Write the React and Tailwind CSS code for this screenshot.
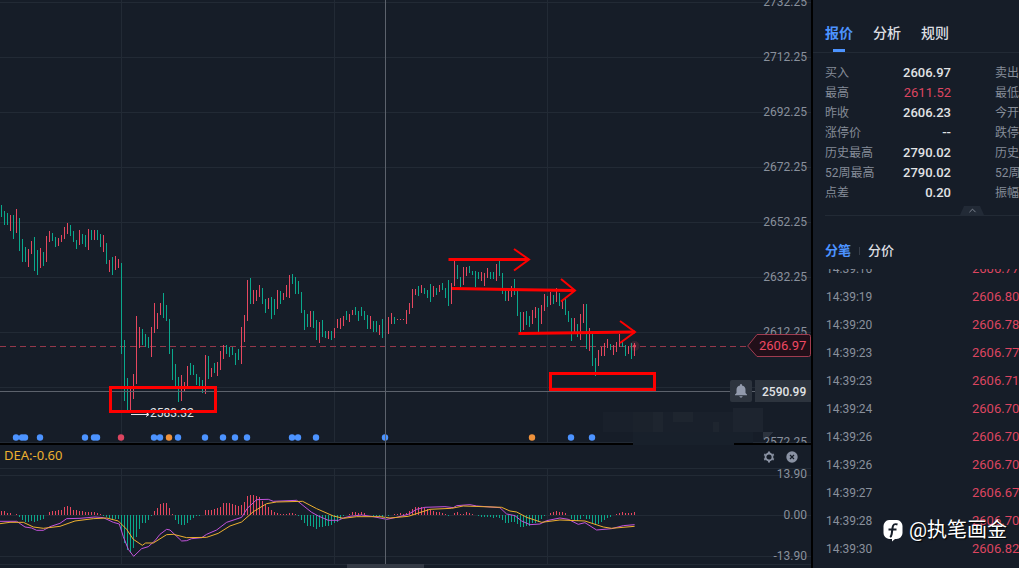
import React from 'react';
import { ChevronUp } from 'lucide-react';

const UP = '#e5475f';
const DOWN = '#0aa88c';

// One entry per candle: direction, top, bottom
const candles = `
G205-217 G211-225 G213-225 R215-231 G215-239 R209-233 G218-251 G239-262 G247-262 R249-267
R241-254 G237-271 G250-275 R248-268 G252-266 R236-262 R231-242 G233-241 G237-247 R238-246
R235-242 R227-239 R223-234 G225-236 G231-242 G240-249 R230-245 G234-244 G235-247 R229-250
G230-240 R230-240 G230-240 G234-247 R235-252 G243-264 R260-272 G257-275 R256-270 R259-268
G263-354 G340-401 G378-410 R389-410 R374-399 R316-384 R327-348 G329-345 G334-347 G337-348
R327-357 R303-333 R313-329 R303-315 G293-318 G305-321 G319-354 G349-380 G364-387 G377-402
R375-401 R382-392 R366-387 G363-375 G365-375 G374-385 G377-387 G380-393 R355-394 G356-379
R368-377 G363-373 R362-376 R351-370 R345-359 G345-354 G347-357 G347-355 G353-365 G349-360
R327-364 R315-342 R280-321 G278-304 R290-304 R290-301 R285-297 G288-304 G299-313 R298-309
G297-319 G299-315 R290-309 G291-304 R293-300 R285-297 R275-298 G274-284 G277-294 G281-294
G292-313 G310-330 G314-327 R311-327 G311-328 G320-340 R322-343 G320-337 G331-338 R331-339
G331-340 R328-338 R319-328 R318-329 R316-326 G311-320 R314-322 R310-315 G307-315 G311-321
G307-316 G311-320 G315-329 R316-329 G321-332 G321-332 R325-335 G319-338 R329-338 R317-334
R313-324 G317-324 R319-320 R319-320 R319-320 R310-324 R303-314 R289-308 R289-295 G286-296
R285-293 G288-294 G290-298 G284-302 R286-297 G288-295 R285-292 G283-290 G288-298 G280-306
R283-304 R261-286 G265-279 G277-287 R267-285 R267-276 G266-273 G271-275 G271-287 G272-279
R272-281 R273-286 R268-278 G272-279 G272-279 R264-281 G261-276 G273-294 G290-301 R290-301
R286-297 G279-295 G290-316 G312-332 R312-330 G311-325 G316-327 R310-324 R307-318 G308-332
R305-324 R294-311 G296-307 R292-305 G295-304 R288-302 G293-306 R300-309 G298-315 G311-322
G318-341 R318-333 G324-337 R314-340 R304-323 G304-349 R328-351 G333-366 G358-376 R350-366
R347-356 R343-356 R339-348 G344-350 R345-355 R342-352 R334-347 G342-347 G345-356 R346-354
G343-359 R343-356`
  .trim()
  .split(/\s+/)
  .map((c) => {
    const [top, bottom] = c.slice(1).split('-').map(Number);
    return { up: c[0] === 'R', top, bottom };
  });

// MACD histogram, thirds of a pixel above or below zero
const histogram = [
  12, 12, 6, 6, 0, 3, -7, -15, -21, -22, -19, -22, -19, -15, -12, 0, 9, 12, 12, 15,
  16, 24, 27, 24, 16, 15, 12, 12, 9, 9, 9, 9, 6, 3, -3, -7, -9, -12, -12, -12,
  -48, -84, -105, -115, -99, -66, -42, -24, -24, -15, -3, 12, 21, 33, 36, 36, 21, 4, -15, -27,
  -30, -30, -24, -15, -9, -3, -3, 0, 15, 15, 15, 18, 21, 24, 36, 36, 36, 33, 30, 27,
  30, 39, 57, 60, 60, 57, 54, 42, 33, 24, 15, 10, 7, 3, 3, 3, 6, 6, 3, -3,
  -15, -24, -33, -33, -36, -42, -36, -36, -33, -33, -30, -24, -20, -12, -3, 0, 3, 9, 9, 7,
  9, 6, 0, -1, -3, -3, -3, -6, -9, -3, 0, 3, 3, 6, 4, 6, 12, 18, 24, 24,
  24, 21, 18, 15, 12, 10, 9, 6, 3, -3, 0, 7, 9, 4, 3, 9, 6, 3, 0, -3,
  -6, -6, -7, -7, -10, -7, -8, -15, -24, -24, -21, -21, -27, -36, -36, -33, -33, -24, -24, -21,
  -12, -3, 0, 6, 9, 12, 9, 9, 6, 0, -12, -15, -18, -12, -3, -12, -12, -24, -30, -27,
  -21, -15, -9, -6, 0, 2, 6, 9, 6, 6, 6, 9,
];

const difLine =
  '0,244 50,244 75,261 95,264 110,271 130,271 150,260 180,250 200,236 240,235 285,231 310,233 340,247 358,252 370,290 385,328 401,349 425,326 445,320 465,302 480,283 500,268 510,270 545,303 560,302 575,296 605,293 620,283 650,270 680,247 725,232 742,205 770,179 805,178 820,184 890,181 935,217 955,228 985,241 1015,241 1030,234 1050,229 1085,225 1120,230 1160,238 1190,232 1225,223 1250,208 1275,202 1335,200 1360,203 1370,197 1410,194 1430,198 1500,203 1520,222 1545,227 1565,243 1590,254 1620,252 1640,242 1680,234 1705,238 1735,253 1755,248 1790,270 1835,266 1870,257 1904,254';
const deaLine =
  '0,251 30,247 70,247 100,261 130,265 180,259 225,243 280,236 320,234 355,243 380,268 400,298 427,316 437,309 460,309 500,284 520,283 560,293 620,292 655,280 690,258 725,246 760,215 800,191 830,186 908,184 950,206 1000,228 1030,235 1070,230 1140,230 1170,234 1225,229 1290,208 1355,205 1390,198 1505,202 1530,213 1550,216 1580,232 1625,247 1680,240 1755,243 1810,261 1835,265 1904,259';

const events = [
  [16, 'b'], [22, 'b'], [25, 'b'], [40, 'b'], [85, 'b'], [94, 'b'], [97, 'b'], [121, 'r'],
  [154, 'b'], [160, 'b'], [169, 'o'], [178, 'b'], [205, 'b'], [223, 'b'], [235, 'b'], [247, 'b'],
  [292, 'b'], [298, 'b'], [316, 'b'], [385, 'b'], [532, 'o'], [571, 'b'], [592, 'b'],
];
const eventColors = { b: '#4c93ff', r: '#dc4560', o: '#ee913b' };

const priceLabels = ['2732.25', '2712.25', '2692.25', '2672.25', '2652.25', '2632.25', '2612.25', '2592.25', '2572.25'];

const quotes = [
  ['买入', '2606.97', '卖出'],
  ['最高', '2611.52', '最低'],
  ['昨收', '2606.23', '今开'],
  ['涨停价', '--', '跌停价'],
  ['历史最高', '2790.02', '历史最低'],
  ['52周最高', '2790.02', '52周最低'],
  ['点差', '0.20', '振幅'],
];

const ticks = [
  ['14:39:16', '2606.77'],
  ['14:39:19', '2606.80'],
  ['14:39:20', '2606.78'],
  ['14:39:23', '2606.77'],
  ['14:39:23', '2606.71'],
  ['14:39:24', '2606.70'],
  ['14:39:26', '2606.70'],
  ['14:39:26', '2606.70'],
  ['14:39:27', '2606.67'],
  ['14:39:28', '2606.70'],
  ['14:39:30', '2606.82'],
];

const GridLine = ({ y }) => <rect x="0" y={y} width="100%" height="1" fill="#222a35" />;

const PriceChart = () => (
  <svg className="absolute inset-0 h-full w-full" shapeRendering="crispEdges">
    {priceLabels.map((label, i) => (
      <GridLine key={label} y={2 + i * 55} />
    ))}
    {[121, 334, 547].map((x) => (
      <rect key={x} x={x} y="0" width="1" height="100%" fill="#222a35" />
    ))}

    {/* Faded patch left of the axis */}
    <g fill="#19202b">
      <rect x="603" y="412" width="160" height="20" />
      <rect x="633" y="412" width="20" height="20" fill="#1b222c" />
      <rect x="653" y="412" width="10" height="20" fill="#1e252f" />
      <rect x="673" y="412" width="20" height="10" fill="#1e252f" />
      <rect x="713" y="422" width="6" height="10" fill="#1e252f" />
      <rect x="733" y="408" width="30" height="24" fill="#1d242f" />
      <rect x="633" y="432" width="120" height="11" fill="#18202b" />
      <path d="M763 432h10l-6 7h-4z" fill="#2c333e" />
    </g>

    <line x1="0" y1="346.5" x2="746" y2="346.5" stroke="#94384b" strokeDasharray="6 4" />
    {candles.map((c, i) => (
      <rect key={i} x={1 + i * 3} y={c.top} width="1" height={c.bottom - c.top} fill={c.up ? UP : DOWN} />
    ))}
    <g shapeRendering="auto">
      <circle cx="634.5" cy="346" r="5" fill={UP} opacity="0.15" />
      <circle cx="634.5" cy="346" r="1.5" fill={UP} />
      {events.map(([x, kind]) => (
        <circle key={x} cx={x} cy="437.5" r="3.2" fill={eventColors[kind]} />
      ))}
      <path d="M131 414.5h17M146 412.5l3 2-3 2" stroke="#e3e5e8" fill="none" />
    </g>
    <rect x="0" y="391" width="100%" height="1" fill="#5c626c" />
  </svg>
);

// Hand-drawn marks sit above the chart and its texts
const Annotations = () => (
  <svg className="absolute inset-0 h-full w-full" fill="none" stroke="#ff0000" strokeWidth="3">
    <rect x="110.5" y="387.5" width="105" height="24" />
    <rect x="550.5" y="373.5" width="104" height="16" />
    <path d="M448.500 259.5H529M452 288.5L575 290.5M518.500 333.500L635 332" />
    <path strokeWidth="2" d="M514 249l15 10.500-15 11M561 279l14 11.500-14 11M620 321l15 11-15 11" />
  </svg>
);

const MacdChart = () => (
  <svg className="absolute inset-0 h-full w-full" shapeRendering="crispEdges">
    {[0, 7, 47, 88, 96].map((y) => (
      <GridLine key={y} y={y} />
    ))}
    {[121, 334, 547].map((x) => (
      <rect key={x} x={x} y="0" width="1" height="96" fill="#222a35" />
    ))}
    {histogram.map((v, i) => {
      const height = Math.round(Math.abs(v) / 3);
      return (
        <rect key={i} x={1 + i * 3} y={v > 0 ? 47 - height : 47} width="1" height={height} fill={v > 0 ? UP : DOWN} />
      );
    })}
    {/* Line points are stored at three times their size */}
    <g transform="translate(0 -28) scale(0.3333)" fill="none" strokeWidth="3" shapeRendering="auto">
      <polyline points={difLine} stroke="#c353dc" />
      <polyline points={deaLine} stroke="#eeb02f" />
    </g>
    <rect x="347" y="96" width="77" height="4" fill="#343a45" />
  </svg>
);

const ChartArea = () => (
  <main className="relative flex min-w-0 flex-1 flex-col overflow-hidden">
    <section className="relative min-h-0 flex-1 overflow-hidden">
      <PriceChart />
      <ul className="absolute right-1 -top-[25px] text-right text-xs text-[#89909c]">
        {priceLabels.map((label) => (
          <li key={label} className={label === '2592.25' ? 'invisible h-[55px]' : 'h-[55px] leading-[55px]'}>
            {label}
          </li>
        ))}
      </ul>
      <span className="absolute left-[150px] top-[405px] text-xs leading-4 text-[#e3e5e8]">2583.32</span>
      <Annotations />

      {/* Last price tag */}
      <div className="absolute right-0 top-[334px] h-[23px] w-16">
        <svg className="absolute inset-0 h-full w-full" viewBox="0 0 64 23">
          <path d="M.7 12L10 .5H61.500a2 2 0 0 1 2 2v18a2 2 0 0 1-2 2H10z" fill="#210f19" stroke="#a03c50" />
        </svg>
        <span className="relative block pl-3 text-[13px] leading-6 text-[#ee4963]">2606.97</span>
      </div>

      <div className="absolute right-0 top-[380px] flex h-[22px] gap-[3px]">
        <button type="button" aria-label="价格提醒" className="flex w-[22px] items-center justify-center rounded-xs bg-[#2d343e]">
          <svg width="14" height="14" viewBox="0 0 14 14" fill="#929aac">
            <path d="M6 1a1 1 0 0 1 2 0v.4a4.300 4.300 0 0 1 3.500 4.300V9L13 10.500v.8H1v-.8L2.500 9V5.700A4.300 4.300 0 0 1 6 1.400zM5.200 12.200h3.600L7.800 13.600H6.200z" />
          </svg>
        </button>
        <span className="w-14 bg-[#2d343e] pl-[7px] text-xs font-medium leading-6 text-[#e1e3e6]">2590.99</span>
      </div>
    </section>

    <section className="shrink-0">
      <div className="flex h-0.5 bg-black">
        <span className="ml-[633px] w-[101px] bg-[#18202b]" />
      </div>
      <header className="flex h-[23px] items-center justify-between pl-1 pr-[13px]">
        <span className="pb-1 font-['Noto_Sans'] text-[13px] leading-5 text-[#eeb02f]">DEA:-0.60</span>
        <div className="flex gap-[11px]">
          <button type="button" aria-label="设置">
            <svg width="12" height="12" viewBox="0 0 12 12" fill="none" stroke="#8a92a3">
              <circle cx="6" cy="6" r="3.500" strokeWidth="1.800" />
              <path strokeWidth="2" d="M6 .5V2M6 10v1.500M1.200 3.300l1.300.7M9.500 8l1.300.7M1.200 8.700L2.500 8M9.500 4l1.300-.7" />
            </svg>
          </button>
          <button type="button" aria-label="关闭">
            <svg width="12" height="12" viewBox="0 0 12 12">
              <circle cx="6" cy="6" r="5.700" fill="#8a92a3" />
              <path d="M4 4l4 4M8 4l-4 4" stroke="#161d28" strokeWidth="1.200" />
            </svg>
          </button>
        </div>
      </header>
      <div className="relative h-[100px]">
        <MacdChart />
        <ul className="absolute right-1 -top-[14px] text-right text-xs leading-[41px] text-[#89909c]">
          <li>13.90</li>
          <li>0.00</li>
          <li>-13.90</li>
        </ul>
      </div>
    </section>

    {/* Crosshair */}
    <div className="absolute top-0 bottom-1 left-[385px] w-px bg-[#5c626c]" />
  </main>
);

const QuotePanel = () => (
  <aside className="flex w-52 shrink-0 flex-col overflow-hidden border-l-2 border-black">
    <nav className="flex h-[53px] shrink-0 items-end gap-5 border-b border-[#222a35] pl-3 text-sm font-medium text-[#dcdee1]">
      <button type="button" className="flex flex-col items-center gap-[6px] font-bold text-[#4c93ff]">
        <span>报价</span>
        <span className="h-[3px] w-3 bg-[#4c93ff]" />
      </button>
      <button type="button" className="pb-[9px]">分析</button>
      <button type="button" className="pb-[9px]">规则</button>
    </nav>

    <table className="ml-3 mt-[10px] w-[230px] shrink-0 table-fixed text-xs text-[#858c98]">
      <tbody>
        {quotes.map(([label, value, other]) => (
          <tr key={label} className="h-5 whitespace-nowrap">
            <th scope="row" className="w-[60px] p-0 text-left font-normal">{label}</th>
            <td className={`w-[66px] p-0 text-right text-[13px] leading-5 ${value === '2611.52' ? 'text-[#dc4560]' : 'font-medium text-[#e1e3e6]'}`}>
              {value}
            </td>
            <th scope="row" className="p-0 pl-11 text-left font-normal">{other}</th>
          </tr>
        ))}
      </tbody>
    </table>

    <div className="ml-3 flex h-[13px] shrink-0 items-end border-b border-[#222a35] pl-[135px]">
      <button type="button" aria-label="收起" className="flex h-[9px] w-6 items-center justify-center bg-[#222a36] text-[#858c98] [clip-path:polygon(4px_0,20px_0,100%_100%,0_100%)]">
        <ChevronUp size={11} />
      </button>
    </div>

    <nav className="mt-[25px] flex h-5 shrink-0 items-center pl-3 text-[13px] font-medium text-[#dcdee1]">
      <button type="button" className="font-bold text-[#4c93ff]">分笔</button>
      <span className="mx-2 h-2 w-px bg-[#353d49]" />
      <button type="button">分价</button>
    </nav>

    <div className="mt-2 flex min-h-0 flex-1 flex-col overflow-hidden">
      <table className="ml-[13px] -mt-[14px] w-[193px] table-fixed">
        <tbody>
          {ticks.map(([time, price], i) => (
            <tr key={i} className="h-7">
              <td className="p-0 text-xs text-[#89909c]">{time}</td>
              <td className="w-[47px] p-0 text-[13px] text-[#dc4560]">{price}</td>
            </tr>
          ))}
        </tbody>
      </table>
    </div>
  </aside>
);

const Signature = () => (
  <div className="absolute bottom-6 right-3 flex items-center gap-[6px] text-white">
    <svg width="20" height="23" viewBox="0 0 20 23">
      <path d="M6 1h8a6 6 0 0 1 5.500 6v7a6 6 0 0 1-6 6H12l-3 2.500V20H6a6 6 0 0 1-5.500-6V7A6 6 0 0 1 6 1z" fill="#fff" />
      <path d="M14.500 5.500c-3-1-4.500 0-4.900 3L8.700 15c-.3 2-.8 2.500-1.700 3M5.500 10.500h8" fill="none" stroke="#161d28" strokeWidth="2" />
    </svg>
    <span className="text-xl leading-7 [text-shadow:1px_1px_1px_#000]">@执笔画金</span>
  </div>
);

export default function App() {
  return (
    <div className="relative flex h-screen overflow-hidden bg-[#161d28] font-[Roboto,'Noto_Sans_CJK_SC',sans-serif]">
      <ChartArea />
      <QuotePanel />
      <Signature />
    </div>
  );
}
